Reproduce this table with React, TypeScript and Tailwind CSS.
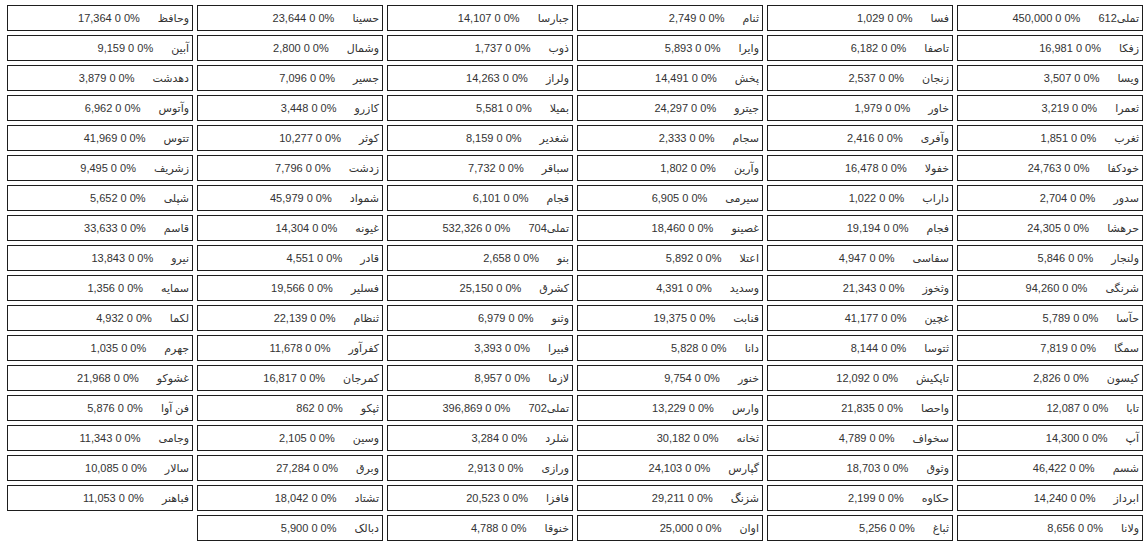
const rows: [string, string][][] = [
  [["تملی612", "450,000"], ["فسا", "1,029"], ["ثنام", "2,749"], ["جبارسا", "14,107"], ["حسینا", "23,644"], ["وحافظ", "17,364"]],
  [["زفکا", "16,981"], ["تاصفا", "6,182"], ["وایرا", "5,893"], ["ذوب", "1,737"], ["وشمال", "2,800"], ["آبین", "9,159"]],
  [["ویسا", "3,507"], ["زنجان", "2,537"], ["پخش", "14,491"], ["ولراز", "14,263"], ["جسیر", "7,096"], ["دهدشت", "3,879"]],
  [["ثعمرا", "3,219"], ["خاور", "1,979"], ["جیترو", "24,297"], ["بمیلا", "5,581"], ["کازرو", "3,448"], ["وآتوس", "6,962"]],
  [["ثغرب", "1,851"], ["وآفری", "2,416"], ["سجام", "2,333"], ["شغدیر", "8,159"], ["کوثر", "10,277"], ["تتوس", "41,969"]],
  [["خودکفا", "24,763"], ["خفولا", "16,478"], ["وآرین", "1,802"], ["سباقر", "7,732"], ["زدشت", "7,796"], ["زشریف", "9,495"]],
  [["سدور", "2,704"], ["داراب", "1,022"], ["سیرمی", "6,905"], ["قجام", "6,101"], ["شمواد", "45,979"], ["شپلی", "5,652"]],
  [["حرهشا", "24,305"], ["فجام", "19,194"], ["غصینو", "18,460"], ["تملی704", "532,326"], ["غیونه", "14,304"], ["قاسم", "33,633"]],
  [["ولنجار", "5,846"], ["سفاسی", "4,947"], ["اعتلا", "5,892"], ["بنو", "2,658"], ["قادر", "4,551"], ["نیرو", "13,843"]],
  [["شرنگی", "94,260"], ["وثخوز", "21,343"], ["وسدید", "4,391"], ["کشرق", "25,150"], ["فسلیر", "19,566"], ["سمایه", "1,356"]],
  [["حآسا", "5,789"], ["غچین", "41,177"], ["قنابت", "19,375"], ["وثنو", "6,979"], ["ثنظام", "22,139"], ["لکما", "4,932"]],
  [["سمگا", "7,819"], ["ثتوسا", "8,144"], ["دانا", "5,828"], ["فبیرا", "3,393"], ["کفرآور", "11,678"], ["جهرم", "1,035"]],
  [["کیسون", "2,826"], ["تاپکیش", "12,092"], ["خنور", "9,754"], ["لازما", "8,957"], ["کمرجان", "16,817"], ["غشوکو", "21,968"]],
  [["تابا", "12,087"], ["واحصا", "21,835"], ["وارس", "13,229"], ["تملی702", "396,869"], ["ثپکو", "862"], ["فن آوا", "5,876"]],
  [["آپ", "14,300"], ["سخواف", "4,789"], ["ثخانه", "30,182"], ["شلرد", "3,284"], ["وسین", "2,105"], ["وجامی", "11,343"]],
  [["شسم", "46,422"], ["وثوق", "18,703"], ["گپارس", "24,103"], ["ورازی", "2,913"], ["وبرق", "27,284"], ["سالار", "10,085"]],
  [["ابرداز", "14,240"], ["حکاوه", "2,199"], ["شزنگ", "29,211"], ["فافزا", "20,523"], ["تشتاد", "18,042"], ["فباهنر", "11,053"]],
  [["ولانا", "8,656"], ["ثباغ", "5,256"], ["اوان", "25,000"], ["خنوقا", "4,788"], ["دبالک", "5,900"]],
];

function Cell({ name, value }: { name: string; value: string }) {
  return (
    <div className="flex items-center overflow-hidden whitespace-nowrap border border-[#1e1e1e] pr-[3px]">
      <span>{name}</span>
      <span dir="ltr" className="mr-[18px]">
        {value} 0 0%
      </span>
    </div>
  );
}

export default function App() {
  return (
    <div
      className="h-[547px] w-[1147px] overflow-hidden bg-white pl-[7px] pr-[4px] pt-[5px] text-[11px] text-[#333]"
      style={{ fontFamily: '"Liberation Sans", "DejaVu Sans", sans-serif' }}
    >
      <div dir="rtl" className="grid grid-cols-6 auto-rows-[26px] gap-x-[4px] gap-y-[4px]">
        {rows.flat().map(([name, value], i) => (
          <Cell key={i} name={name} value={value} />
        ))}
      </div>
    </div>
  );
}
